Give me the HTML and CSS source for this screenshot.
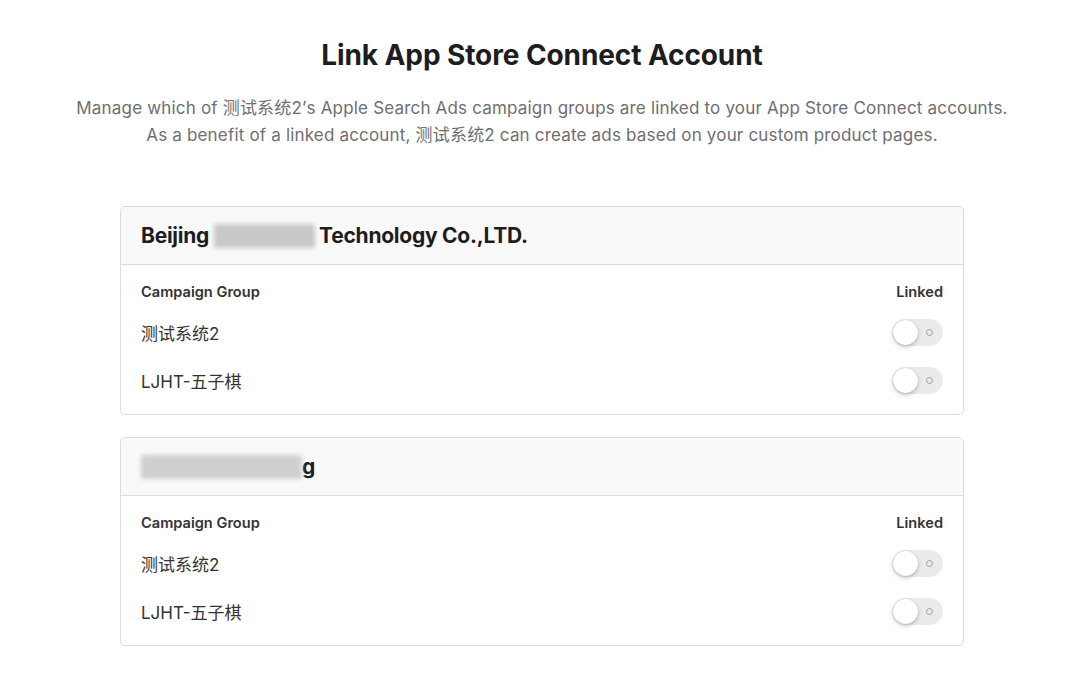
FILE: index.html
```html
<!DOCTYPE html>
<html lang="en">
<head>
<meta charset="utf-8">
<title>Link App Store Connect Account</title>
<link rel="stylesheet" href="styles.css">
</head>
<body>
<main class="page">
  <header class="intro">
    <h1 class="title">Link App Store Connect Account</h1>
    <p class="subtitle">Manage which of 测试系统2’s Apple Search Ads campaign groups are linked to your App Store Connect accounts.<br>As a benefit of a linked account, 测试系统2 can create ads based on your custom product pages.</p>
  </header>

  <section class="card">
    <div class="card-head">
      <h2 class="org">Beijing <span class="blur blur-a"></span> Technology Co.,LTD.</h2>
    </div>
    <div class="card-body">
      <div class="row row-head">
        <span class="col-label">Campaign Group</span>
        <span class="col-label">Linked</span>
      </div>
      <div class="row">
        <span class="name">测试系统2</span>
        <span class="toggle"><span class="knob"></span><span class="off-mark"></span></span>
      </div>
      <div class="row">
        <span class="name">LJHT-五子棋</span>
        <span class="toggle"><span class="knob"></span><span class="off-mark"></span></span>
      </div>
    </div>
  </section>

  <section class="card">
    <div class="card-head">
      <h2 class="org"><span class="blur blur-b"></span>g</h2>
    </div>
    <div class="card-body">
      <div class="row row-head">
        <span class="col-label">Campaign Group</span>
        <span class="col-label">Linked</span>
      </div>
      <div class="row">
        <span class="name">测试系统2</span>
        <span class="toggle"><span class="knob"></span><span class="off-mark"></span></span>
      </div>
      <div class="row">
        <span class="name">LJHT-五子棋</span>
        <span class="toggle"><span class="knob"></span><span class="off-mark"></span></span>
      </div>
    </div>
  </section>
</main>
</body>
</html>
```

FILE: styles.css
```css
* { box-sizing: border-box; }

html, body {
  margin: 0;
  padding: 0;
  background: #ffffff;
}

body {
  font-family: Inter, "Noto Sans CJK SC", "Noto Sans", sans-serif;
  color: #1d1d1f;
}

.page {
  width: 844px;
  margin-left: 120px;
  padding-top: 36px;
  display: flex;
  flex-direction: column;
}

.intro {
  display: flex;
  flex-direction: column;
  align-items: center;
  margin-bottom: 57px;
}

.title {
  margin: 0;
  font-size: 28px;
  line-height: 38px;
  font-weight: 700;
  letter-spacing: -0.1px;
  color: #1d1d1f;
}

.subtitle {
  margin: 21px -80px 0;
  text-align: center;
  font-size: 17px;
  line-height: 27px;
  color: #6e6e73;
  white-space: nowrap;
  letter-spacing: 0.18px;
}

.card {
  border: 1px solid #dcdcdc;
  border-radius: 5px;
  overflow: hidden;
  margin-bottom: 22px;
}

.card-head {
  height: 58px;
  background: #f9f9f9;
  border-bottom: 1px solid #dcdcdc;
  display: flex;
  align-items: center;
  padding: 0 20px;
}

.org {
  margin: 0;
  font-size: 21px;
  font-weight: 700;
  letter-spacing: -0.25px;
  color: #1d1d1f;
  display: flex;
  align-items: center;
}

.blur {
  display: inline-block;
  height: 24px;
  background: #c9c9c9;
  filter: blur(2px);
  border-radius: 2px;
}

.blur-a { width: 101px; margin: 0 4px 0 5px; }
.blur-b { width: 161px; background: #cfcfcf; }

.card-body {
  padding: 14px 20px 10px;
  display: flex;
  flex-direction: column;
}

.row {
  display: flex;
  justify-content: space-between;
  align-items: center;
  height: 48px;
}

.row-head {
  height: 26px;
  margin-bottom: 3px;
}

.col-label {
  font-size: 14.6px;
  font-weight: 600;
  color: #333333;
}

.name {
  font-size: 17px;
  color: #333333;
}

.toggle {
  position: relative;
  width: 51px;
  height: 27px;
  border-radius: 14px;
  background: #ebebed;
  display: inline-block;
}

.knob {
  position: absolute;
  left: 1px;
  top: 1px;
  width: 25px;
  height: 25px;
  border-radius: 50%;
  background: #ffffff;
  box-shadow: 0 2px 4px rgba(0,0,0,0.22), 0 0 1px rgba(0,0,0,0.2);
}

.off-mark {
  position: absolute;
  right: 10px;
  top: 10px;
  width: 7px;
  height: 7px;
  border-radius: 50%;
  border: 1.3px solid #a2a2a6;
}
```
